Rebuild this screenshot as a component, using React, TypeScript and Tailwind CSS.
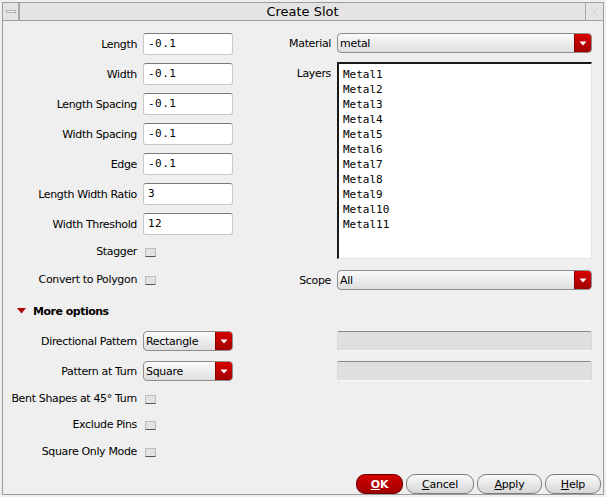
import React from "react";

const Arrow = () => (
  <svg width="8" height="5" viewBox="0 0 8 5">
    <polygon points="0.5,0.5 7.5,0.5 4,4.5" fill="#ffffff" />
  </svg>
);

const Dropdown = ({ value, w }: { value: string; w: string }) => (
  <div
    className={`${w} h-[20px] flex items-stretch rounded-[4px] border border-[#8e8e8e] bg-gradient-to-b from-[#fbfbfb] to-[#dedede] overflow-hidden`}
  >
    <div className="flex-1 flex items-center pl-[2px] text-[11px] tracking-[-0.3px] text-black leading-none">{value}</div>
    <div className="w-[17px] flex items-center justify-center bg-gradient-to-b from-[#d80000] to-[#a20000] border-l border-[#8a0000]">
      <Arrow />
    </div>
  </div>
);

const TextField = ({ value }: { value: string }) => (
  <div className="w-[90px] h-[22px] flex items-center pl-[4px] bg-white border border-[#c8c8c8] border-t-[#7a7a7a] rounded-[3px] font-['DejaVu_Sans_Mono',monospace] text-[11px] tracking-[0.5px] text-black">
    {value}
  </div>
);

const Check = () => (
  <div className="w-[11px] h-[9px] mt-[2px] bg-[#e2e2e2] border border-[#bcbcbc] border-b-[#555555] rounded-[1px]" />
);

const Label = ({ children, w = "w-[134px]" }: { children: React.ReactNode; w?: string }) => (
  <div className={`${w} shrink-0 text-right text-[11px] tracking-[-0.35px] text-black leading-none whitespace-nowrap`}>{children}</div>
);

const InputRow = ({ label, value, mt }: { label: string; value: string; mt: string }) => (
  <div className={`flex items-center h-[22px] ${mt}`}>
    <Label>{label}</Label>
    <div className="ml-[6px]">
      <TextField value={value} />
    </div>
  </div>
);

const CheckRow = ({ label, mt, h = "h-[20px]" }: { label: string; mt: string; h?: string }) => (
  <div className={`flex items-center ${h} ${mt}`}>
    <Label>{label}</Label>
    <div className="ml-[8px]">
      <Check />
    </div>
  </div>
);

const Disabled = () => (
  <div className="w-[255px] h-[20px] bg-[#dfdfdf] border border-[#d8d8d8] border-t-[#8a8a8a] border-b-[#f8f8f8] rounded-[2px]" />
);

const Btn = ({ children, w, primary }: { children: React.ReactNode; w: string; primary?: boolean }) => (
  <div
    className={`${w} h-[20px] flex items-center justify-center rounded-[9px] border text-[11px] tracking-[-0.2px] leading-none ${
      primary
        ? "bg-gradient-to-b from-[#d40000] to-[#a00000] border-[#6a0000] text-white font-bold"
        : "bg-gradient-to-b from-[#fafafa] to-[#d6d6d6] border-[#7c7c7c] text-black"
    }`}
  >
    {children}
  </div>
);

const layers = ["Metal1", "Metal2", "Metal3", "Metal4", "Metal5", "Metal6", "Metal7", "Metal8", "Metal9", "Metal10", "Metal11"];

export default function App() {
  return (
    <div className="w-[606px] h-[497px] bg-[#efefef] pt-[2px] pl-[2px] pr-[2px] pb-[2px] font-['DejaVu_Sans',sans-serif]">
      <div className="w-[602px] h-[493px] border border-[#9c9c9c] flex flex-col">
        {/* title bar */}
        <div className="h-[18px] flex border-b border-[#9c9c9c] bg-[#e4e4e4]">
          <div className="w-[17px] flex items-center justify-center border-r-2 border-[#a8a8a8]">
            <div className="w-[10px] h-[3px] bg-[#f6f6f6] border border-[#b0b0b0]" />
          </div>
          <div className="flex-1 flex items-center justify-center text-[13px] text-black leading-none">Create Slot</div>
          <div className="w-[18px] flex items-center justify-center border-l border-[#a8a8a8]">
            <svg width="9" height="10" viewBox="0 0 9 10">
              <path d="M1 1 L4.5 5 L1 9 M8 1 L4.5 5 L8 9" stroke="#c4c4c4" strokeWidth="1" strokeDasharray="1 1" fill="none" />
            </svg>
          </div>
        </div>

        {/* body */}
        <div className="flex-1 flex flex-col">
          <div className="flex pt-[12px]">
            {/* left column */}
            <div className="flex flex-col">
              <InputRow label="Length" value="-0.1" mt="" />
              <InputRow label="Width" value="-0.1" mt="mt-[8px]" />
              <InputRow label="Length Spacing" value="-0.1" mt="mt-[8px]" />
              <InputRow label="Width Spacing" value="-0.1" mt="mt-[8px]" />
              <InputRow label="Edge" value="-0.1" mt="mt-[8px]" />
              <InputRow label="Length Width Ratio" value="3" mt="mt-[8px]" />
              <InputRow label="Width Threshold" value="12" mt="mt-[8px]" />
              <CheckRow label="Stagger" mt="mt-[6px]" />
              <CheckRow label="Convert to Polygon" mt="mt-[8px]" />
            </div>
            {/* right column */}
            <div className="flex flex-col ml-[4px]">
              <div className="flex items-center h-[20px]">
                <Label w="w-[94px]">Material</Label>
                <div className="ml-[6px]">
                  <Dropdown value="metal" w="w-[255px]" />
                </div>
              </div>
              <div className="flex mt-[9px]">
                <Label w="w-[94px]">
                  <div className="pt-[6px]">Layers</div>
                </Label>
                <div className="ml-[6px] w-[255px] h-[197px] bg-white border-l-2 border-t-2 border-[#1a1a1a] border-r border-b border-r-[#e4e4e4] border-b-[#e4e4e4] pt-[3px] pl-[4px] font-['DejaVu_Sans_Mono',monospace] text-[11px] text-black">
                  {layers.map((l) => (
                    <div key={l} className="h-[15px] leading-[15px]">
                      {l}
                    </div>
                  ))}
                </div>
              </div>
              <div className="flex items-center h-[20px] mt-[11px]">
                <Label w="w-[94px]">Scope</Label>
                <div className="ml-[6px]">
                  <Dropdown value="All" w="w-[255px]" />
                </div>
              </div>
            </div>
          </div>

          {/* more options */}
          <div className="flex items-center h-[18px] mt-[12px] pl-[14px]">
            <svg width="9" height="6" viewBox="0 0 9 6">
              <polygon points="0,0 9,0 4.5,5.5" fill="#b00000" />
            </svg>
            <span className="ml-[7px] text-[11px] font-bold tracking-[-0.5px] text-black leading-none">More options</span>
          </div>

          <div className="flex items-center h-[20px] mt-[11px]">
            <Label>Directional Pattern</Label>
            <div className="ml-[6px]">
              <Dropdown value="Rectangle" w="w-[90px]" />
            </div>
            <div className="ml-[104px]">
              <Disabled />
            </div>
          </div>
          <div className="flex items-center h-[20px] mt-[10px]">
            <Label>Pattern at Turn</Label>
            <div className="ml-[6px]">
              <Dropdown value="Square" w="w-[90px]" />
            </div>
            <div className="ml-[104px]">
              <Disabled />
            </div>
          </div>
          <CheckRow label="Bent Shapes at 45° Turn" mt="mt-[8px]" h="h-[18px]" />
          <CheckRow label="Exclude Pins" mt="mt-[8px]" h="h-[18px]" />
          <CheckRow label="Square Only Mode" mt="mt-[9px]" h="h-[18px]" />

          <div className="mt-auto flex justify-end gap-[3px] pr-[2px]">
            <Btn w="w-[47px]" primary>
              <span>
                <span className="underline">O</span>K
              </span>
            </Btn>
            <Btn w="w-[68px]">
              <span>
                <span className="underline">C</span>ancel
              </span>
            </Btn>
            <Btn w="w-[65px]">
              <span>
                <span className="underline">A</span>pply
              </span>
            </Btn>
            <Btn w="w-[56px]">
              <span>
                <span className="underline">H</span>elp
              </span>
            </Btn>
          </div>
        </div>
      </div>
    </div>
  );
}
